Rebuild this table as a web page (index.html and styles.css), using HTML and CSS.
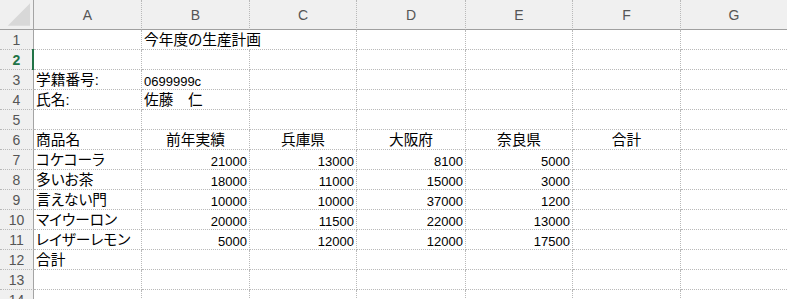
FILE: index.html
```html
<!DOCTYPE html>
<html lang="ja">
<head>
<meta charset="utf-8">
<title>今年度の生産計画</title>
<link rel="stylesheet" href="styles.css">
</head>
<body>
<div class="sheet">
  <div class="hd corner"><svg width="34" height="30" viewBox="0 0 34 30"><polygon points="8,26 31,3 31,26" fill="#d8d8d8"/></svg></div>
  <div class="hd">A</div><div class="hd">B</div><div class="hd">C</div><div class="hd">D</div><div class="hd">E</div><div class="hd">F</div><div class="hd last">G</div>

  <div class="rh">1</div><div class="c"></div><div class="c jp spill">今年度の生産計画</div><div class="c"></div><div class="c"></div><div class="c"></div><div class="c"></div><div class="c last"></div>
  <div class="rh sel">2</div><div class="c"></div><div class="c"></div><div class="c"></div><div class="c"></div><div class="c"></div><div class="c"></div><div class="c last"></div>
  <div class="rh">3</div><div class="c jp">学籍番号:</div><div class="c">0699999c</div><div class="c"></div><div class="c"></div><div class="c"></div><div class="c"></div><div class="c last"></div>
  <div class="rh">4</div><div class="c jp">氏名:</div><div class="c jp">佐藤　仁</div><div class="c"></div><div class="c"></div><div class="c"></div><div class="c"></div><div class="c last"></div>
  <div class="rh">5</div><div class="c"></div><div class="c"></div><div class="c"></div><div class="c"></div><div class="c"></div><div class="c"></div><div class="c last"></div>
  <div class="rh">6</div><div class="c jp">商品名</div><div class="c jp m">前年実績</div><div class="c jp m">兵庫県</div><div class="c jp m">大阪府</div><div class="c jp m">奈良県</div><div class="c jp m">合計</div><div class="c last"></div>
  <div class="rh">7</div><div class="c jp">コケコーラ</div><div class="c n">21000</div><div class="c n">13000</div><div class="c n">8100</div><div class="c n">5000</div><div class="c"></div><div class="c last"></div>
  <div class="rh">8</div><div class="c jp">多いお茶</div><div class="c n">18000</div><div class="c n">11000</div><div class="c n">15000</div><div class="c n">3000</div><div class="c"></div><div class="c last"></div>
  <div class="rh">9</div><div class="c jp">言えない門</div><div class="c n">10000</div><div class="c n">10000</div><div class="c n">37000</div><div class="c n">1200</div><div class="c"></div><div class="c last"></div>
  <div class="rh">10</div><div class="c jp">マイウーロン</div><div class="c n">20000</div><div class="c n">11500</div><div class="c n">22000</div><div class="c n">13000</div><div class="c"></div><div class="c last"></div>
  <div class="rh">11</div><div class="c jp">レイザーレモン</div><div class="c n">5000</div><div class="c n">12000</div><div class="c n">12000</div><div class="c n">17500</div><div class="c"></div><div class="c last"></div>
  <div class="rh">12</div><div class="c jp">合計</div><div class="c"></div><div class="c"></div><div class="c"></div><div class="c"></div><div class="c"></div><div class="c last"></div>
  <div class="rh">13</div><div class="c"></div><div class="c"></div><div class="c"></div><div class="c"></div><div class="c"></div><div class="c"></div><div class="c last"></div>
  <div class="rh">14</div><div class="c"></div><div class="c"></div><div class="c"></div><div class="c"></div><div class="c"></div><div class="c"></div><div class="c last"></div>
</div>
</body>
</html>
```

FILE: styles.css
```css
html, body {
  margin: 0;
  padding: 0;
  background: #ffffff;
  overflow: hidden;
}

/* worksheet grid: row-number column, columns A–G, header row + 14 rows */
.sheet {
  display: grid;
  grid-template-columns: 34px 108px 108px 107px 109px 107px 108px 1fr;
  grid-template-rows: 30px;
  grid-auto-rows: 20px;
  width: 787px;
}

/* column letters */
.hd {
  background: #f0f0f0;
  border-right: 1px dotted #b9b9b9;
  border-bottom: 1px solid #9f9f9f;
  display: flex;
  align-items: center;
  justify-content: center;
  font: 14px/16px "Liberation Sans", Arial, sans-serif;
  color: #555555;
}

.corner {
  border-right: 1px solid #a4a4a4;
  padding: 0;
}

.corner svg {
  display: block;
}

/* row numbers */
.rh {
  position: relative;
  background: #f0f0f0;
  border-right: 1px solid #a4a4a4;
  border-bottom: 1px dotted #b9b9b9;
  display: flex;
  align-items: center;
  justify-content: center;
  font: 14px/16px "Liberation Sans", Arial, sans-serif;
  color: #555555;
}

/* active row marker */
.rh.sel {
  color: #217346;
  font-weight: bold;
}

.rh.sel::after {
  content: "";
  position: absolute;
  right: -1px;
  top: -1px;
  bottom: -1px;
  width: 2px;
  background: #217346;
}

/* data cells: bottom-aligned like a spreadsheet */
.c {
  min-width: 0;
  border-right: 1px dotted #b9b9b9;
  border-bottom: 1px dotted #b9b9b9;
  display: flex;
  align-items: flex-end;
  padding: 0 2px 0 2px;
  white-space: nowrap;
  font: 13px/15px "Liberation Sans", Arial, "Noto Sans CJK JP", sans-serif;
  color: #000000;
}

/* Japanese text uses proportional kana widths */
.c.jp {
  font-size: 14.7px;
  line-height: 17px;
  font-feature-settings: "palt";
}

.c.n {
  justify-content: flex-end;
}

.c.m {
  justify-content: center;
}

/* title spills into the neighbouring empty cell */
.c.spill {
  border-right-color: transparent;
  overflow: visible;
  position: relative;
  z-index: 1;
}

.last {
  border-right: none;
}
```
